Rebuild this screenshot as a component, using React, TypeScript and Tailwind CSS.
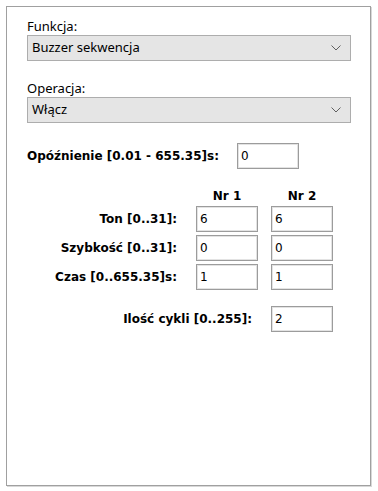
const uiFont = { fontFamily: '"Noto Sans", "Open Sans", sans-serif' };
const tahoma = { fontFamily: '"DejaVu Sans", "Liberation Sans", sans-serif' };

function Select({ value }: { value: string }) {
  return (
    <div className="flex h-[26px] w-[324px] items-center justify-between border border-[#adadad] bg-[#e5e5e5] pl-[4px] pr-[9px] text-[13px] text-black">
      <span>{value}</span>
      <svg width="10" height="6" viewBox="0 0 10 6" fill="none">
        <path d="M0.5 0.5 L5 5 L9.5 0.5" stroke="#606060" strokeWidth="1" />
      </svg>
    </div>
  );
}

function Field({ value }: { value: string }) {
  return (
    <div
      className="flex h-[26px] w-[62px] items-center border border-[#9c9c9c] bg-white pl-[3px] text-[12px] text-black shadow-[inset_0_0_0_1px_#e3e3e3]"
      style={tahoma}
    >
      {value}
    </div>
  );
}

const rows = [
  { label: "Ton [0..31]:", a: "6", b: "6" },
  { label: "Szybkość [0..31]:", a: "0", b: "0" },
  { label: "Czas [0..655.35]s:", a: "1", b: "1" },
];

export default function App() {
  return (
    <div className="h-[491px] w-[378px] bg-white p-[6px]">
      <div className="flex h-[480px] w-[365px] flex-col border border-[#a0a0a0] bg-white pl-[20px] pt-[11px] shadow-[1px_1px_0_#d8d8d8]">
        {/* Function selects */}
        <div style={uiFont} className="flex flex-col">
          <div className="text-[13px] leading-[16px] text-black">Funkcja:</div>
          <div className="mt-[1px]">
            <Select value="Buzzer sekwencja" />
          </div>
          <div className="mt-[19px] text-[13px] leading-[16px] text-black">Operacja:</div>
          <div className="mt-[1px]">
            <Select value="Włącz" />
          </div>
        </div>

        {/* Delay */}
        <div className="mt-[20px] flex items-center" style={tahoma}>
          <span className="w-[210px] text-[12px] font-bold text-black">Opóźnienie [0.01 - 655.35]s:</span>
          <Field value="0" />
        </div>

        {/* Sequence table */}
        <div className="mt-[20px] flex flex-col" style={tahoma}>
          <div className="flex h-[14px] items-center text-[12px] font-bold text-black">
            <div className="w-[169px]" />
            <div className="w-[62px] text-center">Nr 1</div>
            <div className="w-[13px]" />
            <div className="w-[62px] text-center">Nr 2</div>
          </div>
          <div className="mt-[3px] flex flex-col gap-[3px]">
            {rows.map((r) => (
              <div key={r.label} className="flex items-center">
                <div className="w-[150px] whitespace-nowrap text-right text-[12px] font-bold text-black">{r.label}</div>
                <div className="w-[19px]" />
                <Field value={r.a} />
                <div className="w-[13px]" />
                <Field value={r.b} />
              </div>
            ))}
          </div>
          <div className="mt-[16px] flex items-center">
            <div className="w-[225px] text-right text-[12px] font-bold text-black">Ilość cykli [0..255]:</div>
            <div className="w-[19px]" />
            <Field value="2" />
          </div>
        </div>
      </div>
    </div>
  );
}
